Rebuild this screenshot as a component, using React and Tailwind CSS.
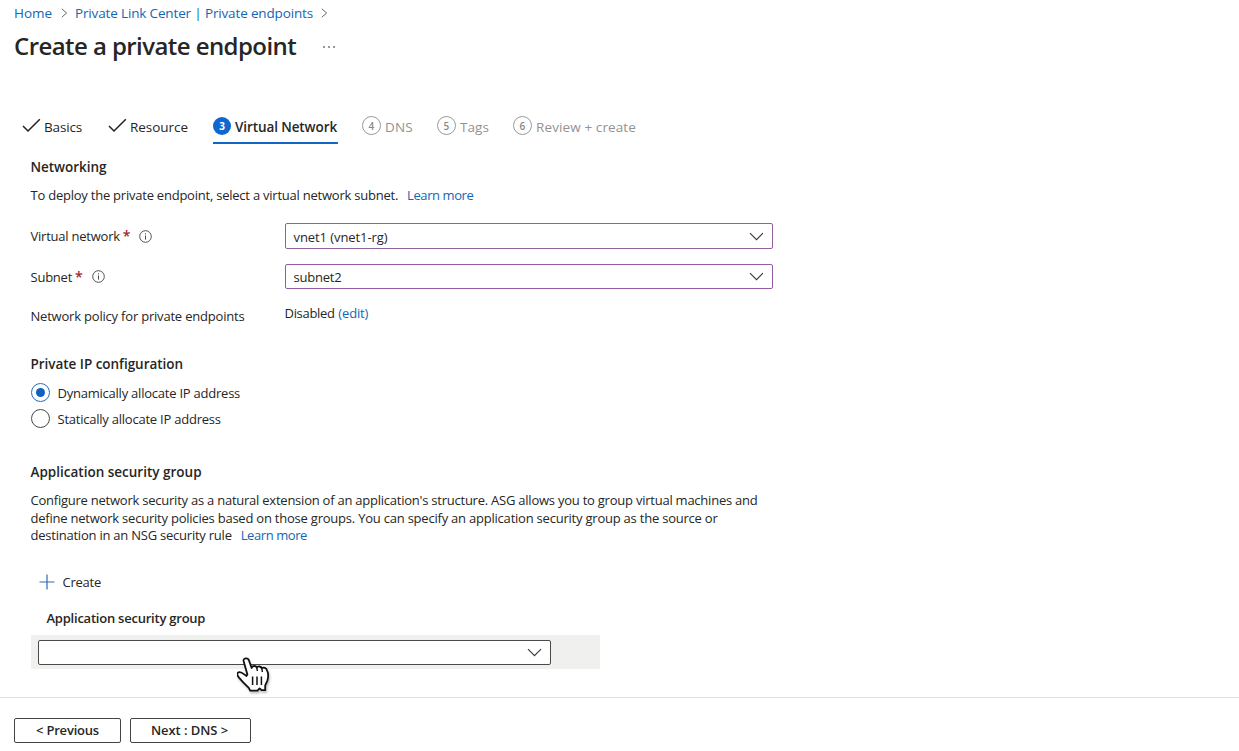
import React from "react";

function ChevronRight() {
  return (
    <svg width="7" height="10" viewBox="0 0 7 10" fill="none" stroke="#666" strokeWidth="1">
      <path d="M0.8 0.8L5.6 5L0.8 9.2" />
    </svg>
  );
}

function ChevronDown() {
  return (
    <svg width="15" height="9" viewBox="0 0 15 9" fill="none" stroke="#3b3b3b" strokeWidth="1.2" className="shrink-0">
      <path d="M1 1.2L7.5 7.7L14 1.2" />
    </svg>
  );
}

function Check() {
  return (
    <svg width="19" height="15" viewBox="0 0 19 15" fill="none" stroke="#222" strokeWidth="1.5" className="mb-px shrink-0">
      <path d="M1 8L6 13L17.8 1.2" />
    </svg>
  );
}

function Info() {
  return (
    <svg width="13" height="13" viewBox="0 0 13 13" fill="none" stroke="#4a4a4a" className="shrink-0">
      <circle cx="6.5" cy="6.5" r="5.8" strokeWidth="0.95" />
      <path d="M6.5 5.5V9.6M6.5 3.3V4.4" strokeWidth="1" />
    </svg>
  );
}

function PendingStep({ number, label, className }) {
  return (
    <div className={className}>
      <span className="mb-px flex size-[19px] shrink-0 items-center justify-center rounded-full border border-[#999] text-[10px] leading-none font-semibold text-[#888]">
        {number}
      </span>
      <span className="pt-[2px]">{label}</span>
    </div>
  );
}

function Select({ value, className }) {
  return (
    <div className={`flex items-center justify-between rounded-[2px] border bg-white pl-2 ${className}`}>
      <span className="pt-px">{value}</span>
      <ChevronDown />
    </div>
  );
}

function FieldLabel({ children }) {
  return (
    <div className="flex w-[254px] items-center">
      <span>{children}</span>
      <span className="ml-[3px] text-[14px] font-semibold text-[#a4262c]">*</span>
      <span className="ml-[9px]">
        <Info />
      </span>
    </div>
  );
}

function HandCursor() {
  return (
    <svg width="34" height="36" viewBox="0 0 34 36" className="absolute top-[22px] left-[206px] drop-shadow-[1px_2px_1px_rgba(0,0,0,0.25)]">
      <path
        d="M6.6 4C6 1 10.6 0.4 11.8 3L14.6 11C15.2 8.4 19 8.4 19.8 10.6C20.8 8.8 24.2 9.2 24.8 11.4C26.4 10 29.6 10.8 30 13.4C31.4 16 31.4 20 30.4 23.6L28.2 28.4V33.2H24.6L22.6 31.4L20.4 33.6H13.2L11.8 30.8L6 25.2L2 20.6C-0.6 17.4 -0.2 15.8 2.2 15.2C4.8 14.8 7 17.4 9.4 19L10.4 17.6Z"
        fill="#fff"
        stroke="#111"
        strokeWidth="1.8"
        strokeLinejoin="round"
      />
      <path d="M19.8 10.6L20.4 14M24.8 11.4L25.4 15" stroke="#111" strokeWidth="1.4" />
      <path d="M15.6 19.6V28M20 19.6V28M24.4 19.6V28" stroke="#111" strokeWidth="1.5" />
    </svg>
  );
}

export default function App() {
  return (
    <div className="flex h-[751px] w-full flex-col overflow-hidden bg-white font-['Open_Sans','Segoe_UI',sans-serif] text-[13px] leading-[18px] tracking-[-0.23px] text-[#262626]">
      <nav className="mt-1 flex h-[18px] items-center pl-[14px] text-[13.5px] tracking-[-0.15px] text-[#1366b3]">
        <span className="w-[47px] tracking-[-0.04px]">Home</span>
        <span className="w-[14px]">
          <ChevronRight />
        </span>
        <span className="w-[246px]">Private Link Center | Private endpoints</span>
        <ChevronRight />
      </nav>

      <header className="mt-2 flex h-8 items-center pl-[14px]">
        <h1 className="w-[309px] text-[24px] leading-8 font-semibold tracking-[-0.57px]">Create a private endpoint</h1>
        <span className="flex gap-[3px] pt-[2px]">
          <i className="size-[2px] rounded-full bg-[#777]" />
          <i className="size-[2px] rounded-full bg-[#777]" />
          <i className="size-[2px] rounded-full bg-[#777]" />
        </span>
      </header>

      <div className="mt-12 flex h-[34px] pl-[22px] text-[13.5px]">
        <div className="flex h-8 w-[86px] items-center gap-[3px]">
          <Check />
          <span className="pt-[2px] tracking-[-0.16px]">Basics</span>
        </div>
        <div className="flex h-8 w-[105px] items-center gap-[3px]">
          <Check />
          <span className="pt-[2px] tracking-[-0.04px]">Resource</span>
        </div>
        <div className="mr-6 flex h-[34px] w-[125px] items-center gap-1 border-b-2 border-[#1267c4] font-semibold">
          <span className="mb-px flex size-[18px] shrink-0 items-center justify-center rounded-full bg-[#0f68cf] text-[10px] leading-none font-bold text-white">
            3
          </span>
          <span className="pt-[2px] whitespace-nowrap tracking-[-0.1px]">Virtual Network</span>
        </div>
        <PendingStep number="4" label="DNS" className="flex h-8 w-[75px] items-center gap-1 tracking-[0.15px] text-[#929292]" />
        <PendingStep number="5" label="Tags" className="flex h-8 w-[76px] items-center gap-1 tracking-[0.07px] text-[#929292]" />
        <PendingStep number="6" label="Review + create" className="flex h-8 items-center gap-1 tracking-[0.11px] text-[#929292]" />
      </div>

      <main className="flex flex-col pl-[30.5px]">
        <h2 className="mt-[14px] text-[13.5px] font-semibold tracking-[-0.03px]">Networking</h2>
        <p className="mt-[10px] flex gap-[9px]">
          <span>To deploy the private endpoint, select a virtual network subnet.</span>
          <a className="tracking-[-0.42px] text-[#1366b3]">Learn more</a>
        </p>

        <div className="mt-[19px] flex h-[26px]">
          <FieldLabel>Virtual network</FieldLabel>
          <Select value="vnet1 (vnet1-rg)" className="h-[26px] w-[488px] border-[#8f629c] pr-2 tracking-[-0.08px]" />
        </div>
        <div className="mt-[15px] flex h-[25px]">
          <FieldLabel>Subnet</FieldLabel>
          <Select value="subnet2" className="h-[25px] w-[488px] border-[#935ba5] pr-2" />
        </div>
        <div className="mt-[14px] flex h-[26px] items-center">
          <span className="w-[254px] tracking-[-0.2px]">Network policy for private endpoints</span>
          <span className="pb-[6px] tracking-[-0.3px]">
            Disabled <a className="ml-[0.5px] tracking-[-0.14px] text-[#1366b3]">(edit)</a>
          </span>
        </div>

        <h2 className="mt-[26px] text-[13.5px] font-semibold tracking-[-0.03px]">Private IP configuration</h2>
        <div className="mt-[10px] flex h-[19px] items-center gap-2">
          <span className="flex size-[19px] items-center justify-center rounded-full border border-[#2b6cb5]">
            <i className="size-[9px] rounded-full bg-[#0f62c0]" />
          </span>
          <span className="pt-px">Dynamically allocate IP address</span>
        </div>
        <div className="mt-[7px] flex h-[19px] items-center gap-2">
          <span className="size-[19px] rounded-full border border-[#4a4a4a]" />
          <span className="pt-px">Statically allocate IP address</span>
        </div>

        <h2 className="mt-[35px] text-[13.5px] font-semibold tracking-[0px]">Application security group</h2>
        <p className="mt-[11px] leading-[17.5px]">
          <span className="tracking-[-0.235px]">Configure network security as a natural extension of an application's structure. ASG allows you to group virtual machines and</span>
          <br />
          <span className="tracking-[-0.22px]">define network security policies based on those groups. You can specify an application security group as the source or</span>
          <br />
          destination in an NSG security rule
          <a className="ml-[9px] tracking-[-0.42px] text-[#1366b3]">Learn more</a>
        </p>

        <div className="mt-[28.5px] flex h-[18px] items-center gap-2 pl-2">
          <svg width="16" height="16" viewBox="0 0 16 16" stroke="#2c6db5" strokeWidth="1.2">
            <path d="M8 0.5V15.5M0.5 8H15.5" />
          </svg>
          <span>Create</span>
        </div>
        <h3 className="mt-[18px] pl-4 font-semibold">Application security group</h3>

        <div className="relative ml-[0.5px] mt-2 flex h-[34px] w-[569px] items-center bg-[#f0f0ee] pl-[7px]">
          <Select value="" className="h-[25px] w-[513px] border-[#4a4a4a] pr-2" />
          <HandCursor />
        </div>
      </main>

      <footer className="mt-auto flex h-[54px] gap-[9px] border-t border-[#e2e2e2] pt-5 pl-[14px] font-semibold">
        <button className="h-[25px] w-[107px] rounded-[2px] border border-[#444] pb-px tracking-[-0.2px]">&lt; Previous</button>
        <button className="h-[25px] w-[121px] rounded-[2px] border border-[#444] pr-[2px] pb-px tracking-[-0.08px]">Next : DNS &gt;</button>
      </footer>
    </div>
  );
}
